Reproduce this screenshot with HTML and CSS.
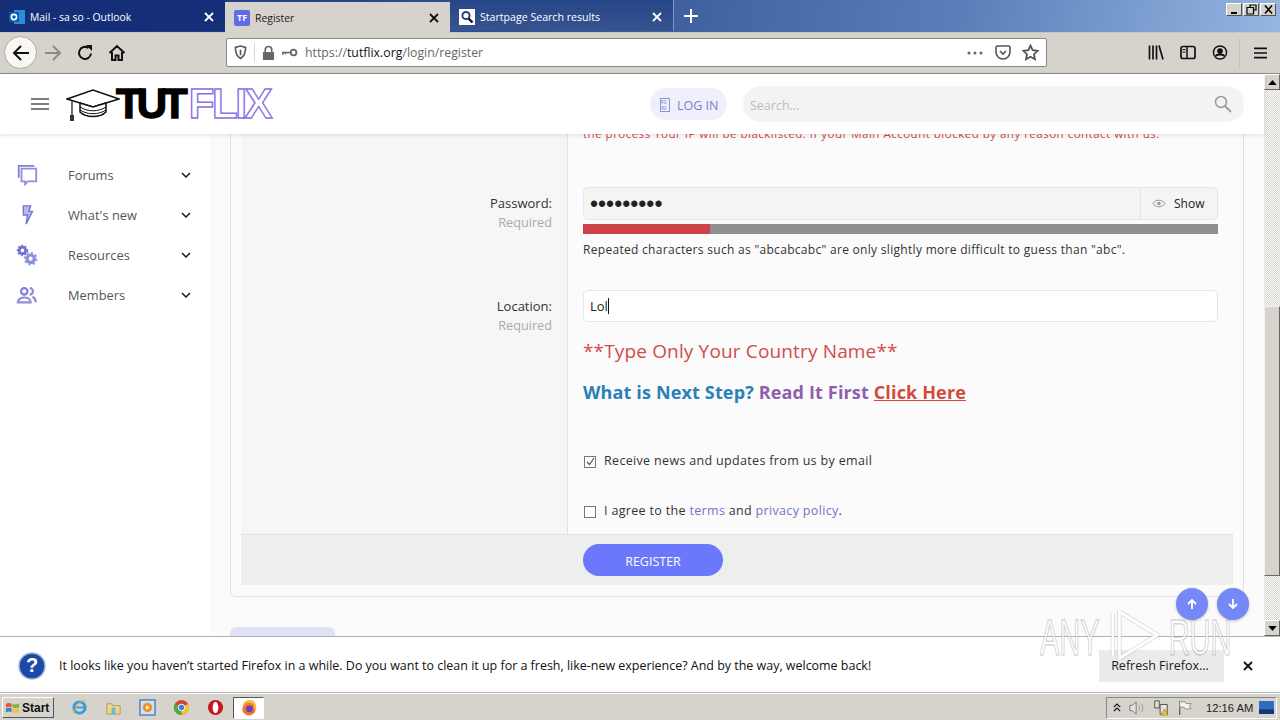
FILE: index.html
```html
<!doctype html>
<html lang="en">
    <head>
        <meta charset="UTF-8" />
        <title>Register</title>
        <link rel="stylesheet" href="styles.css">
    </head>
    <body>
        <!-- Tab strip -->
        <div class="tabbar">
            <div class="tab">
                <svg class="favicon" viewBox="0 0 16 16"><rect x="5" y="1" width="11" height="14" fill="#2b8fd8"/><rect x="0" y="3" width="10" height="10" fill="#0f5ba8"/><circle cx="5" cy="8" r="2.6" fill="none" stroke="#fff" stroke-width="1.6"/></svg>
                <span class="tab-title">Mail - sa so - Outlook</span>
                <svg class="tab-close" viewBox="0 0 10 10"><path d="M1 1l8 8M9 1l-8 8"/></svg>
            </div>
            <div class="tab active">
                <span class="favicon tf">TF</span>
                <span class="tab-title">Register</span>
                <svg class="tab-close" viewBox="0 0 10 10"><path d="M1 1l8 8M9 1l-8 8"/></svg>
            </div>
            <div class="tab">
                <svg class="favicon" viewBox="0 0 16 16"><rect width="16" height="16" fill="#fff"/><circle cx="7" cy="6.5" r="3.6" fill="none" stroke="#2d3f86" stroke-width="2"/><path d="M9.5 9.5l4 4" stroke="#111" stroke-width="2.4"/></svg>
                <span class="tab-title">Startpage Search results</span>
                <svg class="tab-close" viewBox="0 0 10 10"><path d="M1 1l8 8M9 1l-8 8"/></svg>
            </div>
            <svg class="new-tab" viewBox="0 0 14 14"><path d="M7 0v14M0 7h14"/></svg>
            <div class="window-buttons">
                <span class="win-btn"><svg viewBox="0 0 13 11"><rect x="3" y="8" width="6" height="2" fill="#000"/></svg></span>
                <span class="win-btn"><svg viewBox="0 0 13 11"><path d="M5 3V1h6v5H9M2 3.5h6.5V10H2z" fill="none" stroke="#000" stroke-width="1.2"/></svg></span>
                <span class="win-btn"><svg viewBox="0 0 13 11"><path d="M3 1.5l7 8M10 1.5l-7 8" stroke="#000" stroke-width="1.6"/></svg></span>
            </div>
        </div>

        <!-- Browser toolbar -->
        <div class="toolbar">
            <span class="back-btn">
                <svg viewBox="0 0 18 18" class="tool-icon"><path d="M17 9H2M9 2L2 9l7 7" fill="none" stroke="#111" stroke-width="2"/></svg>
            </span>
            <svg viewBox="0 0 18 18" class="tool-icon forward"><path d="M1 9h15M9 2l7 7-7 7" fill="none" stroke="#8d8b86" stroke-width="2"/></svg>
            <svg viewBox="0 0 18 18" class="tool-icon reload"><path d="M15 9.5A6 6 0 1 1 12.5 4" fill="none" stroke="#111" stroke-width="2"/><path d="M10 1h6v6z" fill="#111"/></svg>
            <svg viewBox="0 0 18 18" class="tool-icon home"><path d="M1.5 9L9 2l7.500 7M4 8v8h3.500v-4.500h3V16H14V8" fill="none" stroke="#111" stroke-width="2"/></svg>
            <div class="urlbar">
                <svg viewBox="0 0 14 16" class="shield"><path d="M1.500 2.500L7 1l5.500 1.500c0 6-1.500 9.500-5.500 12C3 12 1.500 8.500 1.500 2.500z" fill="none" stroke="#5a5a5a" stroke-width="1.800"/><path d="M7 5v6" stroke="#5a5a5a" stroke-width="1.800"/></svg>
                <span class="url-sep"></span>
                <svg viewBox="0 0 14 16" class="lock"><rect x="1" y="7" width="12" height="8.500" fill="#666"/><path d="M3.500 7V4.500a3.500 3.500 0 0 1 7 0V7" fill="none" stroke="#666" stroke-width="1.800"/></svg>
                <svg viewBox="0 0 18 10" class="key"><circle cx="13" cy="5" r="3.200" fill="none" stroke="#666" stroke-width="2"/><path d="M10 5H1v2.500M4 5v2" fill="none" stroke="#666" stroke-width="1.800"/></svg>
                <span class="url">https://<b>tutflix.org</b>/login/register</span>
                <svg viewBox="0 0 16 4" class="dots"><circle cx="2" cy="2" r="1.500"/><circle cx="8" cy="2" r="1.500"/><circle cx="14" cy="2" r="1.500"/></svg>
                <svg viewBox="0 0 16 15" class="pocket"><path d="M1 2.500A1.500 1.500 0 0 1 2.500 1h11A1.500 1.500 0 0 1 15 2.500V7a7 7 0 0 1-14 0z" fill="none" stroke="#555" stroke-width="1.600"/><path d="M5 6l3 3 3-3" fill="none" stroke="#555" stroke-width="1.600"/></svg>
                <svg viewBox="0 0 16 16" class="star"><path d="M8 1.500l2 4.300 4.700.6-3.400 3.200.9 4.700L8 12l-4.200 2.300.9-4.700L1.300 6.400 6 5.800z" fill="none" stroke="#555" stroke-width="1.700"/></svg>
            </div>
            <div class="toolbar-right">
                <svg viewBox="0 0 16 14" class="tool-right"><path d="M1.500 0v14M5 0v14M8.500 0v14M11 0l4 14" fill="none" stroke="#111" stroke-width="1.700"/></svg>
                <svg viewBox="0 0 16 14" class="tool-right"><rect x="1" y="1" width="14" height="12" rx="2" fill="none" stroke="#111" stroke-width="1.700"/><path d="M7 1v12" stroke="#111" stroke-width="1.500"/><path d="M2.500 4h3M2.500 6.500h3" stroke="#111"/></svg>
                <svg viewBox="0 0 16 16" class="tool-right"><circle cx="8" cy="8" r="7" fill="none" stroke="#111" stroke-width="1.500"/><circle cx="8" cy="6.500" r="3" fill="#111"/><path d="M3.500 12c1-2.500 8-2.500 9 0" fill="none" stroke="#111" stroke-width="2"/></svg>
                <span class="toolbar-sep"></span>
                <svg viewBox="0 0 14 12" class="tool-menu"><path d="M0 1h14M0 6h14M0 11h14" stroke="#111" stroke-width="1.700"/></svg>
            </div>
        </div>

        <div class="viewport">
            <div class="site">
                <header class="site-header">
                    <svg viewBox="0 0 18 14" class="burger"><path d="M0 2h18M0 7h18M0 12h18" stroke="#555" stroke-width="1.600"/></svg>
                    <div class="logo">
                        <svg viewBox="0 0 54 34" class="logo-cap">
                            <path d="M1 11L27 2l26 9-26 8z" fill="#fff" stroke="#111" stroke-width="1.500"/>
                            <path d="M14 15v9c6 6 20 6 26 0v-9l-13 4z" fill="#fff" stroke="#111" stroke-width="1.500"/>
                            <path d="M14 19c8 5 18 5 26 0M14 22c8 5 18 5 26 0" fill="none" stroke="#111"/>
                            <path d="M6 12v16" stroke="#111" stroke-width="1.200"/>
                            <rect x="4" y="27" width="4" height="6" fill="#333"/>
                        </svg>
                        <span class="logo-tut">TUT</span><span class="logo-flix">FLIX</span>
                    </div>
                    <a class="login-pill">
                        <span class="tofu">F0<br>90</span>
                        LOG IN
                    </a>
                    <div class="search">
                        <span class="search-text">Search...</span>
                        <svg viewBox="0 0 18 18" class="search-icon"><circle cx="7" cy="7" r="5.500" fill="none" stroke="#9a9a9a" stroke-width="1.500"/><path d="M11 11l6 6" stroke="#9a9a9a" stroke-width="1.800"/></svg>
                    </div>
                </header>

                <div class="site-body">
                    <nav class="sidebar">
                        <div class="nav-item">
                            <svg viewBox="0 0 24 24" class="nav-icon"><path d="M3 15V2h17" fill="none" stroke="#7c80df" stroke-width="2"/><path d="M6 5h16v14H13l-3 3v-3H6z" fill="none" stroke="#8f8fd8" stroke-width="2"/></svg>
                            <span class="nav-label">Forums</span>
                            <svg viewBox="0 0 10 6" class="chevron"><path d="M1 1l4 4 4-4"/></svg>
                        </div>
                        <div class="nav-item">
                            <svg viewBox="0 0 24 24" class="nav-icon"><path d="M8 2h8l-2 6h4l-7 14 1.500-10H8z" fill="#b7b8ee" stroke="#7376d8" stroke-width="1.500"/></svg>
                            <span class="nav-label">What's new</span>
                            <svg viewBox="0 0 10 6" class="chevron"><path d="M1 1l4 4 4-4"/></svg>
                        </div>
                        <div class="nav-item">
                            <svg viewBox="0 0 24 24" class="nav-icon"><circle cx="7" cy="7" r="3.500" fill="none" stroke="#6c70cf" stroke-width="3"/><circle cx="7" cy="7" r="5.500" fill="none" stroke="#6c70cf" stroke-width="1.500" stroke-dasharray="2 2"/><circle cx="16" cy="16" r="4" fill="none" stroke="#8c8fe0" stroke-width="3.500"/><circle cx="16" cy="16" r="6.500" fill="none" stroke="#8c8fe0" stroke-width="1.800" stroke-dasharray="2.500 2.500"/></svg>
                            <span class="nav-label">Resources</span>
                            <svg viewBox="0 0 10 6" class="chevron"><path d="M1 1l4 4 4-4"/></svg>
                        </div>
                        <div class="nav-item">
                            <svg viewBox="0 0 24 24" class="nav-icon"><circle cx="9" cy="8" r="3.500" fill="none" stroke="#7c80df" stroke-width="2.400"/><path d="M2 20c0-7 14-7 14 0z" fill="none" stroke="#8f8fd8" stroke-width="2.400"/><path d="M15 4.500a3.500 3.500 0 0 1 0 7M18 14c2 1 3.500 3 3.500 6" fill="none" stroke="#8f8fd8" stroke-width="2.400"/></svg>
                            <span class="nav-label">Members</span>
                            <svg viewBox="0 0 10 6" class="chevron"><path d="M1 1l4 4 4-4"/></svg>
                        </div>
                    </nav>

                    <main class="content">
                        <div class="card">
                            <div class="form-row note-row">
                                <div class="form-label"></div>
                                <div class="form-field">
                                    <div class="red-note">the process Your IP will be blacklisted. If your Main Account blocked by any reason contact with us.</div>
                                </div>
                            </div>

                            <div class="form-row password-row">
                                <div class="form-label">
                                    <div class="label-name">Password:</div>
                                    <div class="label-hint">Required</div>
                                </div>
                                <div class="form-field">
                                    <div class="input-group">
                                        <span class="password-dots">•••••••••</span>
                                        <span class="show-addon">
                                            <svg viewBox="0 0 16 10" class="eye"><path d="M1 5c3.500-5 10.500-5 14 0-3.500 5-10.500 5-14 0z" fill="none" stroke="#8a8a8a"/><circle cx="8" cy="5" r="2" fill="#9a9a9a"/></svg>
                                            Show
                                        </span>
                                    </div>
                                    <div class="strength"><div class="strength-fill" style="width: 20%"></div></div>
                                    <div class="strength-text">Repeated characters such as "abcabcabc" are only slightly more difficult to guess than "abc".</div>
                                </div>
                            </div>

                            <div class="form-row location-row">
                                <div class="form-label">
                                    <div class="label-name">Location:</div>
                                    <div class="label-hint">Required</div>
                                </div>
                                <div class="form-field">
                                    <div class="text-input">Lol<span class="caret"></span></div>
                                    <div class="country-note">**Type Only Your Country Name**</div>
                                    <div class="next-step">
                                        <span class="step-blue">What is Next Step?</span>
                                        <span class="step-purple">Read It First</span>
                                        <a class="step-red">Click Here</a>
                                    </div>
                                </div>
                            </div>

                            <div class="form-row check-row">
                                <div class="form-label"></div>
                                <div class="form-field">
                                    <label class="check">
                                        <svg viewBox="0 0 12 12" class="check-box"><rect x=".5" y=".5" width="11" height="11" fill="#fff" stroke="#777"/><path d="M3 6l2.500 2.500L10 2" fill="none" stroke="#555" stroke-width="1.200"/></svg>
                                        Receive news and updates from us by email
                                    </label>
                                </div>
                            </div>

                            <div class="form-row agree-row">
                                <div class="form-label"></div>
                                <div class="form-field">
                                    <label class="check">
                                        <svg viewBox="0 0 12 12" class="check-box"><rect x=".5" y=".5" width="11" height="11" fill="#fff" stroke="#777"/></svg>
                                        <span>I agree to the <a class="link">terms</a> and <a class="link">privacy policy</a>.</span>
                                    </label>
                                </div>
                            </div>

                            <div class="form-footer">
                                <button class="register-btn">REGISTER</button>
                            </div>
                        </div>
                        <div class="next-card"></div>
                    </main>
                </div>

                <div class="float-btns">
                    <span class="float-btn"><svg viewBox="0 0 12 12"><path d="M6 11V2M2 6l4-4 4 4"/></svg></span>
                    <span class="float-btn"><svg viewBox="0 0 12 12"><path d="M6 1v9M2 6l4 4 4-4"/></svg></span>
                </div>
            </div>

            <div class="scrollbar">
                <span class="scroll-btn"><svg viewBox="0 0 10 6"><path d="M5 0l5 6H0z"/></svg></span>
                <div class="scroll-track"><div class="scroll-thumb"></div></div>
                <span class="scroll-btn"><svg viewBox="0 0 10 6"><path d="M0 0h10L5 6z"/></svg></span>
            </div>
        </div>

        <!-- Notification bar -->
        <div class="notice">
            <svg viewBox="0 0 28 28" class="notice-icon"><circle cx="14" cy="14" r="13" fill="#1d4aa5" stroke="#9fb6de" stroke-width="1.500"/><text x="14" y="20" text-anchor="middle" class="notice-q">?</text></svg>
            <span class="notice-text">It looks like you haven’t started Firefox in a while. Do you want to clean it up for a fresh, like-new experience? And by the way, welcome back!</span>
            <span class="notice-btn">Refresh Firefox…</span>
            <svg viewBox="0 0 10 10" class="notice-close"><path d="M1 1l8 8M9 1l-8 8"/></svg>
        </div>

        <!-- Taskbar -->
        <div class="taskbar">
            <span class="start">
                <svg viewBox="0 0 16 14" class="start-logo"><path d="M1 3c2-1 4-1 6 0v4C5 6 3 6 1 7z" fill="#e2582b"/><path d="M8 3c2 1 4 1 7 0v4c-3 1-5 1-7 0z" fill="#7cb53f"/><path d="M1 8c2-1 4-1 6 0v4c-2-1-4-1-6 0z" fill="#3b7fd0"/><path d="M8 8c2 1 4 1 7 0v4c-3 1-5 1-7 0z" fill="#f2c230"/></svg>
                Start
            </span>
            <svg viewBox="0 0 18 18" class="task-icon"><circle cx="9" cy="9" r="6" fill="none" stroke="#3a9bd9" stroke-width="3"/><path d="M3 9h12" stroke="#3a9bd9" stroke-width="2"/><path d="M15 1c-4 0-10 6-13 15" fill="none" stroke="#e8b93c"/></svg>
            <svg viewBox="0 0 18 18" class="task-icon"><path d="M2 5h5l1 2h8v9H2z" fill="#ecd68a" stroke="#b59a4a"/><rect x="7" y="9" width="4" height="7" fill="#6db5dc"/></svg>
            <svg viewBox="0 0 18 18" class="task-icon"><rect x="1" y="1" width="16" height="16" fill="#cfe0f2" stroke="#4a7fb8" stroke-width="1.500"/><circle cx="9" cy="9" r="5" fill="#ef9320"/><path d="M7.500 6.500l4 2.500-4 2.500z" fill="#fff"/></svg>
            <svg viewBox="0 0 18 18" class="task-icon"><circle cx="9" cy="9" r="8" fill="#d8412f"/><path d="M9 9l-7-4a8 8 0 0 0 7 12z" fill="#4caa4a"/><path d="M9 9l7-4a8 8 0 0 1-7 12z" fill="#f4c430"/><circle cx="9" cy="9" r="3.500" fill="#3f7fe0" stroke="#fff"/></svg>
            <svg viewBox="0 0 18 18" class="task-icon"><circle cx="9" cy="9" r="8" fill="#c8151b"/><ellipse cx="9" cy="9" rx="3" ry="6" fill="#fff"/></svg>
            <span class="task-active">
                <svg viewBox="0 0 18 18" class="task-ff"><circle cx="9" cy="10" r="7.500" fill="#f2762e"/><path d="M3 6c1-4 6-6 10-4 3 2 3 6 3 8" fill="none" stroke="#f6bf3a" stroke-width="2.500"/><circle cx="9.500" cy="10" r="3.800" fill="#6b3fb5"/></svg>
            </span>
            <div class="tray">
                <svg viewBox="0 0 10 12" class="tray-up"><path d="M1 5l4-4 4 4M1 10l4-4 4 4" fill="none" stroke="#111" stroke-width="1.500"/></svg>
                <svg viewBox="0 0 18 16" class="tray-icon"><path d="M1 5h3l4-4v14l-4-4H1z" fill="#e6e4de" stroke="#777"/><path d="M11 5c1 2 1 4 0 6M14 3c2 3 2 7 0 10" fill="none" stroke="#999"/></svg>
                <svg viewBox="0 0 18 18" class="tray-icon"><path d="M2 1h5v8H2zM8 5h8v11H8z" fill="#e6e4de" stroke="#444"/><path d="M13 10l4 7H9z" fill="#f1c232" stroke="#8a6d00" stroke-width=".6"/></svg>
                <svg viewBox="0 0 18 18" class="tray-icon"><path d="M3 1v16" stroke="#666" stroke-width="1.500"/><path d="M3 2h6l1 2h6l-2 3 2 3h-7l-1-2H3z" fill="#f4f3ef" stroke="#888"/></svg>
                <span class="clock">12:16 AM</span>
                <svg viewBox="0 0 16 14" class="tray-desktop"><rect width="16" height="14" fill="#2b6cc0"/><rect y="9" width="16" height="5" fill="#0f3a78"/></svg>
            </div>
        </div>

        <div class="watermark">
            <span>ANY</span>
            <svg viewBox="0 0 64 56" preserveAspectRatio="none" class="watermark-play"><path d="M6 4v48M14 2v52l46-26z" fill="none" stroke="#bbb" stroke-opacity=".35" stroke-width="6"/><path d="M6 4v48M14 2v52l46-26z" fill="none" stroke="#fff" stroke-width="3"/></svg>
            <span>RUN</span>
        </div>
    </body>
</html>
```

FILE: styles.css
```css
* {
    box-sizing: border-box;
}

html,
body {
    margin: 0;
    height: 720px;
    overflow: hidden;
}

body {
    position: relative;
    display: flex;
    flex-direction: column;
    font-family: "Open Sans", "Noto Sans", sans-serif;
    font-size: 13px;
    color: #222;
    background: #fff;
}

/* Tab strip */
.tabbar {
    display: flex;
    align-items: stretch;
    height: 33px;
    padding-bottom: 1px;
    background: linear-gradient(100deg, #16307a 0%, #2f4f93 40%, #5a7fb8 75%, #95b6e2 100%);
    border-bottom: 1px solid #c9c6bd;
}

.tab {
    display: flex;
    align-items: center;
    width: 225px;
    padding: 2px 9px 0;
    color: #fff;
    font-size: 10.400px;
}

.tab:first-child {
    width: 225px;
    background: #142f78;
}

.tab:nth-child(3) {
    width: 224px;
    border-right: 1px solid #7d97c8;
    background: linear-gradient(#274689, #37548f);
    font-size: 10.600px;
}

.tab.active {
    margin-top: 2px;
    margin-bottom: -2px;
    padding-top: 0;
    color: #222;
    background: #d6d3cc;
}

.favicon {
    flex: none;
    width: 16px;
    height: 16px;
    margin-right: 5px;
}

.favicon.tf {
    display: flex;
    align-items: center;
    justify-content: center;
    background: #5f6be8;
    color: #fff;
    font-size: 9px;
    font-weight: 700;
    border-radius: 2px;
}

.tab-title {
    flex: 1;
}

.tab-close {
    width: 10px;
    height: 10px;
    margin-right: 2px;
    stroke: #fff;
    stroke-width: 1.800;
}

.active .tab-close {
    stroke: #111;
}

.new-tab {
    align-self: center;
    width: 14px;
    height: 14px;
    margin-left: 10px;
    stroke: #fff;
    stroke-width: 2;
}

.window-buttons {
    display: flex;
    gap: 1px;
    margin-left: auto;
    padding: 3px 4px 0 0;
}

.win-btn {
    display: flex;
    align-items: center;
    justify-content: center;
    width: 16px;
    height: 13px;
    background: #d6d3cc;
    border: 1px solid;
    border-color: #fff #555 #555 #fff;
}

.win-btn svg {
    width: 13px;
    height: 11px;
}

/* Browser toolbar */
.toolbar {
    display: flex;
    align-items: center;
    height: 41px;
    padding: 0 0 1px 4px;
    background: #d6d3cc;
    border-bottom: 1px solid #8f8d88;
}

.tool-icon {
    width: 18px;
    height: 18px;
}

.back-btn {
    display: flex;
    align-items: center;
    justify-content: center;
    width: 33px;
    height: 33px;
    background: #f8f7f4;
    border: 1px solid #aaa8a2;
    border-radius: 50%;
}

.forward {
    margin-left: 7px;
}

.reload,
.home {
    margin-left: 14px;
}

.urlbar {
    display: flex;
    align-items: center;
    width: 821px;
    height: 29px;
    margin-left: 100px;
    padding: 0 6px 0 7px;
    background: #fff;
    border: 1px solid #8a8882;
    border-radius: 2px;
}

.shield {
    width: 13px;
    height: 15px;
}

.url-sep {
    width: 1px;
    height: 20px;
    margin: 0 7px;
    background: #d8d8d8;
}

.lock {
    width: 13px;
    height: 16px;
}

.key {
    width: 16px;
    height: 9px;
    margin-left: 7px;
}

.url {
    margin-left: 7px;
    font-size: 12.300px;
    color: #666;
}

.url b {
    font-weight: 400;
    color: #111;
}

.dots {
    width: 16px;
    height: 4px;
    margin-left: auto;
    fill: #666;
}

.pocket {
    width: 16px;
    height: 15px;
    margin-left: 12px;
}

.star {
    width: 17px;
    height: 17px;
    margin-left: 11px;
    margin-right: 1px;
}

.toolbar-right {
    display: flex;
    align-items: center;
    margin-left: 101px;
}

.tool-right {
    width: 16px;
    height: 15px;
    margin-right: 16px;
}

.toolbar-sep {
    width: 1px;
    height: 30px;
    margin-left: -5px;
    background: #c6c3bb;
}

.tool-menu {
    width: 13px;
    height: 12px;
    margin-left: 14px;
}

/* Page area */
.viewport {
    display: flex;
    height: 562px;
}

.site {
    position: relative;
    flex: 1;
    display: flex;
    flex-direction: column;
    min-width: 0;
}

.site-header {
    position: relative;
    z-index: 5;
    display: flex;
    align-items: center;
    flex: none;
    height: 60px;
    padding: 0 20px 0 31px;
    background: #fff;
    box-shadow: 0 1px 5px rgba(0, 0, 0, 0.12);
}

.burger {
    width: 18px;
    height: 14px;
}

.logo {
    display: flex;
    align-items: center;
    margin-left: 17px;
    width: 584px;
}

.logo-cap {
    width: 54px;
    height: 34px;
    margin-top: 2px;
}

.logo-tut,
.logo-flix {
    font-family: "Liberation Sans", sans-serif;
    font-size: 42px;
    line-height: 40px;
    font-weight: 700;
}

.logo-tut {
    margin-left: -4px;
    color: #000;
    letter-spacing: -5px;
    -webkit-text-stroke: 1.400px #000;
}

.logo-flix {
    margin-left: 6px;
    color: #fff;
    letter-spacing: -2.400px;
    -webkit-text-stroke: 1.400px #8a6fe8;
}

.login-pill {
    display: flex;
    align-items: center;
    flex: none;
    gap: 7px;
    width: 77px;
    height: 32px;
    padding: 2px 0 0 10px;
    background: #eef0fd;
    border-radius: 16px;
    color: #7a80c8;
    font-size: 12.500px;
    white-space: nowrap;
}

.tofu {
    width: 10px;
    font-size: 5px;
    line-height: 6px;
    letter-spacing: 0;
    color: #6a70c8;
    border: 1px solid #8f94d8;
}

.search {
    display: flex;
    align-items: center;
    justify-content: space-between;
    width: 501px;
    height: 36px;
    margin-left: 16px;
    padding: 0 12px 0 7px;
    background: #f3f3f3;
    border-radius: 18px;
}

.search-text {
    padding-top: 2px;
    font-size: 12.500px;
    color: #bbb;
}

.search-icon {
    width: 18px;
    height: 18px;
}

.site-body {
    flex: 1;
    display: flex;
    min-height: 0;
    overflow: hidden;
}

.sidebar {
    flex: none;
    width: 210px;
    padding-top: 21px;
    background: #fff;
}

.nav-item {
    display: flex;
    align-items: center;
    height: 40px;
    padding-left: 16px;
}

.nav-icon {
    width: 22px;
    height: 22px;
}

.nav-label {
    width: 113px;
    margin-left: 30px;
    font-size: 12.800px;
    letter-spacing: 0.050px;
    color: #555;
}

.chevron {
    width: 10px;
    height: 6px;
    fill: none;
    stroke: #111;
    stroke-width: 1.400;
}

.content {
    flex: 1;
    padding: 0 20px;
    min-width: 0;
    background: #fbfbfb;
}

.card {
    margin-top: -11px;
    padding: 0 10px 11px;
    background: #fbfbfb;
    border: 1px solid #e2e2e2;
    border-radius: 6px;
}

.form-row {
    display: grid;
    grid-template-columns: 326px 1fr;
}

.form-label {
    padding: 0 15px 0 0;
    text-align: right;
    background: #f6f6f6;
}

.form-field {
    padding: 0 15px;
    border-left: 1px solid #e2e2e2;
}

.note-row .form-field {
    padding-bottom: 28px;
}

.red-note {
    font-size: 11.500px;
    line-height: 20px;
    letter-spacing: 0.500px;
    color: #d64545;
}

.password-row .form-field {
    padding-top: 15px;
    padding-bottom: 15px;
}

.password-row .form-label,
.location-row .form-label {
    padding-top: 21px;
}

.label-name {
    line-height: 20px;
    color: #333;
}

.label-hint {
    font-size: 12.700px;
    line-height: 19px;
    color: #aaa;
}

.input-group {
    display: flex;
    align-items: stretch;
    height: 33px;
    background: #f4f4f4;
    border: 1px solid #e6e6e6;
    border-radius: 5px;
}

.password-dots {
    flex: 1;
    padding-left: 6px;
    font-family: "Liberation Sans", sans-serif;
    font-size: 23px;
    line-height: 33px;
    letter-spacing: 0;
    color: #222;
}

.show-addon {
    display: flex;
    align-items: center;
    width: 77px;
    padding-left: 11px;
    gap: 8px;
    font-size: 12px;
    border-left: 1px solid #e6e6e6;
}

.eye {
    width: 14px;
    height: 9px;
}

.strength {
    height: 10px;
    margin-top: 4px;
    background: #8f8f8f;
}

.strength-fill {
    height: 100%;
    background: #cf4149;
}

.strength-text {
    margin-top: 6px;
    font-size: 12px;
    line-height: 20px;
    letter-spacing: 0.300px;
    color: #333;
}

.location-row .form-field {
    padding-top: 15px;
    padding-bottom: 39px;
}

.text-input {
    display: flex;
    align-items: center;
    height: 32px;
    padding-left: 6px;
    background: #fff;
    border: 1px solid #e6e6e6;
    border-radius: 5px;
    font-size: 13px;
}

.caret {
    width: 1px;
    height: 16px;
    background: #111;
}

.country-note {
    margin-top: 15px;
    font-size: 19px;
    line-height: 28px;
    letter-spacing: 0.150px;
    color: #d24b4b;
}

.next-step {
    margin-top: 12px;
    font-size: 18px;
    line-height: 30px;
    letter-spacing: 0.150px;
    font-weight: 700;
}

.step-blue {
    color: #2a80b9;
}

.step-purple {
    color: #8e5fb0;
}

.step-red {
    color: #d14b39;
    text-decoration: underline;
}

.check-row .form-field {
    padding-top: 5px;
    padding-bottom: 25px;
}

.agree-row .form-field {
    padding-top: 5px;
    padding-bottom: 13px;
}

.check {
    display: flex;
    align-items: center;
    gap: 8px;
    line-height: 20px;
    font-size: 12.500px;
    letter-spacing: 0.330px;
    color: #333;
}

.check-box {
    flex: none;
    width: 12px;
    height: 12px;
    margin-top: 2px;
    margin-left: 1px;
}

.link {
    color: #6f75c8;
}

.form-footer {
    height: 51px;
    padding: 9px 0 9px 342px;
    background: #eee;
    border-top: 1px solid #e2e2e2;
}

.register-btn {
    display: block;
    width: 140px;
    height: 32px;
    padding: 2px 0 0;
    border: none;
    border-radius: 16px;
    background: #6b78fb;
    color: #fff;
    font-family: inherit;
    font-size: 12.500px;
}

.next-card {
    width: 105px;
    height: 40px;
    margin-top: 30px;
    background: #dfe1f7;
    border-radius: 6px;
}

.float-btns {
    position: absolute;
    right: 15px;
    bottom: 16px;
    display: flex;
    gap: 9px;
}

.float-btn {
    display: flex;
    align-items: center;
    justify-content: center;
    width: 32px;
    height: 32px;
    background: #7688f5;
    border-radius: 50%;
    box-shadow: 0 1px 3px rgba(0, 0, 0, 0.25);
}

.float-btn svg {
    width: 12px;
    height: 12px;
    fill: none;
    stroke: #fff;
    stroke-width: 1.800;
}

/* Scrollbar */
.scrollbar {
    flex: none;
    display: flex;
    flex-direction: column;
    width: 16px;
}

.scroll-btn {
    display: flex;
    align-items: center;
    justify-content: center;
    flex: none;
    height: 16px;
    background: #d6d3cc;
    border: 1px solid;
    border-color: #fff #666 #666 #fff;
}

.scroll-btn svg {
    width: 9px;
    height: 5px;
}

.scroll-track {
    flex: 1;
    padding-top: 216px;
    background: repeating-conic-gradient(#d6d3cc 0 25%, #fff 0 50%) 0 0 / 2px 2px;
}

.scroll-thumb {
    height: 270px;
    background: #d6d3cc;
    border: 1px solid;
    border-color: #f4f3ef #666 #666 #f4f3ef;
}

/* Notification bar */
.notice {
    display: flex;
    align-items: center;
    height: 57px;
    padding: 2px 0 0 18px;
    background: #fff;
    border-top: 1px solid #b5b3ae;
    border-bottom: 1px solid #b5b3ae;
}

.notice-icon {
    width: 28px;
    height: 28px;
}

.notice-q {
    font-family: "Liberation Sans", sans-serif;
    font-size: 20px;
    font-weight: 700;
    fill: #fff;
}

.notice-text {
    margin-left: 13px;
    font-size: 12.460px;
    color: #111;
}

.notice-btn {
    display: flex;
    align-items: center;
    justify-content: center;
    width: 125px;
    height: 32px;
    margin-left: auto;
    padding-right: 3px;
    background: #ebebeb;
    font-size: 12.500px;
    color: #222;
}

.notice-close {
    width: 10px;
    height: 10px;
    margin: 0 27px 0 19px;
    stroke: #111;
    stroke-width: 1.800;
}

/* Taskbar */
.taskbar {
    display: flex;
    align-items: center;
    flex: 1;
    padding: 1px 3px 0 2px;
    background: #d6d3cc;
    border-top: 1px solid #fff;
}

.start {
    display: flex;
    align-items: center;
    gap: 2px;
    width: 52px;
    height: 21px;
    padding-left: 2px;
    background: #d6d3cc;
    border: 1px solid;
    border-color: #fff #555 #555 #fff;
    font-family: "Liberation Sans", sans-serif;
    font-size: 12px;
    font-weight: 700;
    color: #111;
}

.start-logo {
    width: 15px;
    height: 13px;
}

.task-icon {
    width: 17px;
    height: 17px;
    margin-left: 17px;
}

.task-active {
    display: flex;
    align-items: center;
    justify-content: center;
    width: 31px;
    height: 22px;
    margin-left: 9px;
    background: #fff;
    border: 1px solid;
    border-color: #555 #fff #fff #555;
}

.task-ff {
    width: 16px;
    height: 16px;
}

.tray {
    display: flex;
    align-items: center;
    width: 171px;
    height: 22px;
    margin-left: auto;
    padding-left: 6px;
    border: 1px solid;
    border-color: #888 #fff #fff #888;
}

.tray-up {
    width: 8px;
    height: 10px;
}

.tray-icon {
    width: 16px;
    height: 16px;
    margin-left: 8px;
}

.clock {
    margin-left: 13px;
    font-family: "Liberation Sans", sans-serif;
    font-size: 11.200px;
    color: #222;
}

.tray-desktop {
    width: 15px;
    height: 13px;
    margin-left: 6px;
}

/* Sandbox watermark, sits over everything */
.watermark {
    position: absolute;
    left: 1040px;
    top: 610px;
    z-index: 10;
    display: flex;
    align-items: center;
    gap: 14px;
    width: 334px;
    height: 50px;
    font-family: "Liberation Sans", sans-serif;
    font-size: 50px;
    color: rgba(255, 255, 255, 0.6);
    -webkit-text-stroke: 1.500px rgba(110, 110, 110, 0.3);
    transform: scaleX(0.58);
    transform-origin: left center;
    pointer-events: none;
}

.watermark span {
    padding-top: 6px;
}

.watermark-play {
    flex: none;
    width: 91px;
    height: 50px;
}
```
